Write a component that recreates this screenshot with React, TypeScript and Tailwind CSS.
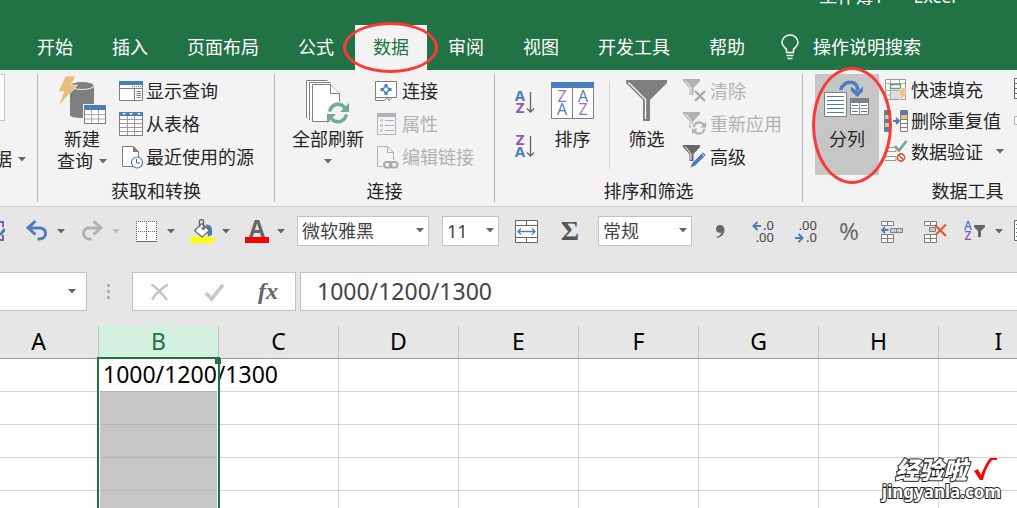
import type { ReactNode } from 'react'
import clsx from 'clsx'

// Spreadsheet window: tab strip, ribbon, quick toolbar, formula bar and grid.

const TABS_BEFORE = ['开始', '插入', '页面布局', '公式']
const TABS_AFTER = ['审阅', '视图', '开发工具', '帮助']
const COLUMNS = ['A', 'B', 'C', 'D', 'E', 'F', 'G', 'H', 'I']
const ROWS = [1, 2, 3, 4, 5]
const VALUE = '1000/1200/1300'

const BLUE = '#4a7ebb'
const GRAY = '#7f7f7f'
const DARK = '#666666'

function Arrow({ muted }: { muted?: boolean }) {
  return (
    <svg width="8" height="5" viewBox="0 0 8 5" className="shrink-0">
      <path d="M0 0h8L4 4.5z" fill={muted ? '#bdbdbd' : '#666'} />
    </svg>
  )
}

/* ---------- ribbon icons ---------- */

function NewQueryIcon() {
  return (
    <svg width="50" height="50" viewBox="0 0 50 50">
      <path d="M13 11v29c0 2 5 3 12 3s12-1 12-3V11z" fill={GRAY} />
      <ellipse cx="25" cy="10.500" rx="12" ry="4" fill={GRAY} stroke="#f3f3f3" />
      <path d="M8.500 1H19l-5 9h6.500L1.500 31 7 16.500H1z" fill="#e9bd7c" stroke="#f3f3f3" strokeWidth=".8" />
      <rect x="26" y="29" width="24" height="21" fill="#f3f3f3" />
      <rect x="27.500" y="30.500" width="21" height="18" fill="#fff" stroke={GRAY} />
      <path d="M27 30h22v5H27z" fill={BLUE} />
      <path d="M34.500 35v13M41.500 35v13M28 39.500h20M28 44h20" stroke="#aaa" />
    </svg>
  )
}

function ShowQueryIcon() {
  return (
    <svg width="24" height="20" viewBox="0 0 24 20">
      <path d="M.5.500h23v19H.5z" fill="#fff" stroke={GRAY} />
      <path d="M0 0h24v4H0z" fill={BLUE} />
      <path d="M1 7.500h22M15.500 7.500V19" stroke={GRAY} />
      <path d="M13 5.500h10" stroke={GRAY} strokeDasharray="1 1" />
      <path d="M17.500 10.500H22M17.500 12.500H22M17.500 14.500H22M17.500 16.500H22" stroke={GRAY} />
    </svg>
  )
}

function FromTableIcon() {
  return (
    <svg width="24" height="24" viewBox="0 0 24 24">
      <path d="M.5.500h23v23H.5z" fill="#fff" stroke={GRAY} />
      <path d="M0 0h24v4H0z" fill={BLUE} />
      <path d="M3 1h4L5 3zM10 1h4l-2 2zM18 1h4l-2 2z" fill="#fff" />
      <path d="M8.500 4v19M15.500 4v19M1 7.500h22M1 11.500h22M1 15.500h22M1 19.500h22" stroke="#9a9a9a" />
    </svg>
  )
}

function RecentIcon() {
  return (
    <svg width="24" height="24" viewBox="0 0 24 24">
      <path d="M3.500 1.500h11l5 5v15h-16z" fill="#fff" stroke={GRAY} />
      <path d="M14 1v6h6z" fill={GRAY} />
      <circle cx="18" cy="17.500" r="5.500" fill="#fff" stroke={BLUE} strokeWidth="1.200" />
      <path d="M17.500 14v4h3.500" fill="none" stroke={DARK} />
    </svg>
  )
}

function RefreshArrows({ color }: { color: string }) {
  return (
    <g fill="none" stroke={color} strokeWidth="3.400">
      <path d="M2.500 9.500C4 4.500 7 2.200 11 2.200c3 0 5.500 1.500 7.500 4.300" />
      <path d="M19.500 12.500c-1.500 5-4.500 7.300-8.500 7.300-3 0-5.500-1.500-7.500-4.300" />
      <path d="M22 1v9h-9zM0 21v-9h9z" fill={color} stroke="none" />
    </g>
  )
}

function RefreshAllIcon() {
  return (
    <svg width="44" height="46" viewBox="0 0 44 46">
      <g fill="#fff" stroke={GRAY}>
        <path d="M.5 39V1.500h21M3.500 41V3.500h21" />
        <path d="M6.500 5.500h18l9 9v28h-27z" />
        <path d="M24.500 5.500v9h9" />
      </g>
      <circle cx="32" cy="34" r="11.500" fill="#f3f3f3" />
      <g transform="translate(21 23)">
        <RefreshArrows color="#74a898" />
      </g>
    </svg>
  )
}

function ConnectionIcon() {
  return (
    <svg width="24" height="22" viewBox="0 0 24 22">
      <path d="M.5 1.500h21v16H.500z" fill="#fff" stroke={GRAY} />
      <path d="M.5 17.500v3h9l3-3 1.500 3 3-3" fill="none" stroke={GRAY} />
      <path d="M11 4v3.500M11 11.500V15M5.500 9.500H9M13 9.500h3.500" stroke={BLUE} strokeWidth="3" />
      <rect x="8.500" y="7" width="5" height="5" fill="#fff" stroke={BLUE} strokeWidth="1.500" transform="rotate(45 11 9.500)" />
    </svg>
  )
}

function PropertiesIcon() {
  return (
    <svg width="24" height="22" viewBox="0 0 24 22">
      <path d="M2.500.500h18v21h-18z" fill="#f7f2f9" stroke="#b1b1b1" />
      <path d="M2 0h19v4H2z" fill="#b1b1b1" />
      <g stroke="#b1b1b1" fill="none">
        <circle cx="6.500" cy="7.500" r="1" />
        <circle cx="6.500" cy="12.500" r="1" />
        <circle cx="6.500" cy="17.500" r="1" />
        <path d="M10 7.500h9M10 12.500h9M10 17.500h9" />
      </g>
    </svg>
  )
}

function EditLinksIcon() {
  return (
    <svg width="24" height="24" viewBox="0 0 24 24">
      <path d="M2.500 1.500h10l6 6v14h-16z" fill="#f7f2f9" stroke="#b1b1b1" />
      <path d="M12.500 1.500v6h6" fill="none" stroke="#b1b1b1" />
      <path d="M8 15h16v9H8z" fill="#f3f3f3" />
      <g fill="none">
        <rect x="9" y="17" width="7.500" height="5.500" rx="2.700" stroke="#aaa" strokeWidth="2" />
        <rect x="15" y="17" width="7.500" height="5.500" rx="2.700" stroke="#aaa" strokeWidth="2" />
      </g>
    </svg>
  )
}

function LetterSortIcon({ top, bottom }: { top: 'A' | 'Z'; bottom: 'A' | 'Z' }) {
  const fill = { A: BLUE, Z: '#8e57ab' }
  return (
    <svg width="20" height="24" viewBox="0 0 20 24" fontFamily="Open Sans, sans-serif" fontWeight="700" fontSize="15">
      <text x="5" y="11" textAnchor="middle" fill={fill[top]}>{top}</text>
      <text x="5" y="23" textAnchor="middle" fill={fill[bottom]}>{bottom}</text>
      <path d="M15.500 2v20M12 18.500l3.500 3.500 3.500-3.500" fill="none" stroke={DARK} strokeWidth="1.300" />
    </svg>
  )
}

function SortIcon() {
  return (
    <svg width="43" height="37" viewBox="0 0 43 37" fontFamily="Open Sans, sans-serif" fontSize="16" fontWeight="500">
      <path d="M.5.500h42v36H.5z" fill="#fff" stroke={GRAY} />
      <path d="M0 0h43v6H0z" fill={BLUE} />
      <path d="M21.500 6v30" stroke={GRAY} />
      <g textAnchor="middle">
        <text x="11" y="20" fill="#a36bbd">Z</text>
        <text x="11" y="33" fill={BLUE}>A</text>
        <text x="32" y="20" fill={BLUE}>A</text>
        <text x="32" y="33" fill="#a36bbd">Z</text>
      </g>
    </svg>
  )
}

function FilterIcon() {
  return (
    <svg width="41" height="41" viewBox="0 0 41 41">
      <path d="M0 0h41v3L24 20v21h-7V20L0 3z" fill={GRAY} />
      <path d="M2.500 2.500l17 17V39" fill="none" stroke="#fff" strokeWidth="1.200" />
    </svg>
  )
}

function SmallFunnel({ color }: { color: string }) {
  return (
    <>
      <path d="M0 0h17v2l-6.500 7v7h-4V9L0 2z" fill={color} />
      <path d="M2 1.500l6 7V15" fill="none" stroke="#fff" />
    </>
  )
}

function ClearFilterIcon() {
  return (
    <svg width="24" height="24" viewBox="0 0 24 24">
      <SmallFunnel color="#b1b1b1" />
      <path d="M12 12l10 10M22 12L12 22" stroke="#a9a9a9" strokeWidth="2.400" />
    </svg>
  )
}

function ReapplyIcon() {
  return (
    <svg width="24" height="24" viewBox="0 0 24 24">
      <SmallFunnel color="#b1b1b1" />
      <circle cx="16" cy="16" r="8" fill="#f3f3f3" />
      <g transform="translate(9 9) scale(.64)">
        <RefreshArrows color="#b1b1b1" />
      </g>
    </svg>
  )
}

function AdvancedIcon() {
  return (
    <svg width="24" height="24" viewBox="0 0 24 24">
      <SmallFunnel color={DARK} />
      <path d="M7 23l2-5L20 7l3 3-11 11z" fill={BLUE} stroke="#f3f3f3" strokeWidth=".6" />
      <path d="M18.500 8.500l3 3" stroke="#f3f3f3" />
    </svg>
  )
}

function TextToColumnsIcon() {
  return (
    <svg width="46" height="40" viewBox="0 0 46 40">
      <path d="M16.500 11C18.500 5 22.500 3.200 26.500 3.200c4.500 0 7 3.300 7.500 8.300" fill="none" stroke={BLUE} strokeWidth="3.400" />
      <path d="M27 7.500l6.500 5 5.500-5v4.500L33.500 18 27 12z" fill={BLUE} />
      <path d="M.5 13.500h22v24H.500z" fill="#fff" stroke={GRAY} />
      <path d="M3 17.500h17M3 21.500h17M3 25.500h17M3 29.500h17M3 33.500h17" stroke={BLUE} />
      <path d="M26.500 19.500h18v16h-18z" fill="#fff" stroke={GRAY} />
      <path d="M26 19h19v5H26z" fill={GRAY} />
      <path d="M35.500 24v11M27 29.500h17" stroke="#999" />
      <path d="M28 26.500h6M28 32.500h6M37 26.500h6M37 32.500h6" stroke={BLUE} />
    </svg>
  )
}

function FlashFillIcon() {
  return (
    <svg width="24" height="24" viewBox="0 0 24 24">
      <path d="M1.500 1.500h20v20h-20z" fill="#fff" stroke="#999" />
      <path d="M1 5.500h20M1 12.500h20M1 17h20M6.500 1v20M15.500 1v5M15.500 12v9" stroke="#aaa" />
      <path d="M6.500 6.500h10v4h-10z" fill="#fff" stroke="#5f9d88" strokeWidth="1.400" />
      <path d="M7 13h9v8H7z" fill="#ddd" />
      <path d="M17 10h6l-3 4.500h3.500L14.500 24l2.500-7h-3z" fill="#eec27c" stroke="#f3f3f3" strokeWidth=".5" />
    </svg>
  )
}

function RemoveDuplicatesIcon() {
  return (
    <svg width="24" height="24" viewBox="0 0 24 24">
      <path d="M.5 1.500h6v21h-6z" fill={BLUE} stroke={GRAY} />
      <path d="M1 6h5v4H1zM1 14h5v4H1z" fill="#efc385" />
      <path d="M16.500 1.500h7v21h-7z" fill="#fff" stroke={GRAY} />
      <path d="M17 2h6v4h-6z" fill={BLUE} />
      <path d="M17 6h6v4h-6z" fill="#efc385" />
      <path d="M17 10.500h6M17 14.500h6M17 18.500h6" stroke={GRAY} />
      <path d="M9 12h6M12 9l3 3-3 3" fill="none" stroke={BLUE} strokeWidth="1.800" />
    </svg>
  )
}

function ValidationIcon() {
  return (
    <svg width="24" height="24" viewBox="0 0 24 24">
      <path d="M1 7.500h11v4H1M1 16.500h11v4H1" fill="#fff" stroke="#999" />
      <path d="M11 6l4 4.500L22.500 1" fill="none" stroke="#6aa893" strokeWidth="2.600" />
      <circle cx="17" cy="17.500" r="3.600" fill="#fff" stroke="#d9532c" strokeWidth="1.600" />
      <path d="M14.500 15l5 5" stroke="#d9532c" strokeWidth="1.500" />
    </svg>
  )
}

/* ---------- toolbar icons ---------- */

function UndoIcon({ color, flip }: { color: string; flip?: boolean }) {
  return (
    <svg width="24" height="24" viewBox="0 0 24 24">
      <g transform={flip ? 'translate(24 0) scale(-1 1)' : undefined} fill="none" stroke={color} strokeWidth="3">
        <path d="M3 9h11.500c4.500 0 6 3 6 5.500s-2 5.500-6.500 5.500h-1.500" />
        <path d="M10.500 2L3 8.800l7.500 6.700" />
      </g>
    </svg>
  )
}

function BorderIcon() {
  return (
    <svg width="24" height="24" viewBox="0 0 24 24">
      <path d="M1 2h21v20H1z" fill="#fff" />
      <path d="M1 2.500h21M1.500 2v20M21.500 2v20M11.500 2v20M1 12.500h21" stroke={DARK} strokeDasharray="1 1" />
      <path d="M1 22.500h21" stroke={DARK} />
    </svg>
  )
}

function FillIcon() {
  return (
    <svg width="24" height="24" viewBox="0 0 24 24">
      <path d="M0 18h24v6H0z" fill="#ff0" />
      <path d="M16 5.500c4 0 6 2 6 6V16l-4 1.500z" fill={BLUE} />
      <path d="M4.500 11.500L12 4.500l7.500 7L12 18z" fill="#fff" stroke={DARK} strokeWidth="1.200" />
      <path d="M9.500 8V2c0-2 4-2 4 0v6.500M11.500 8.500l2 2 2-3" fill="none" stroke={DARK} strokeWidth="1.400" />
    </svg>
  )
}

function FontColorIcon() {
  return (
    <svg width="24" height="24" viewBox="0 0 24 24">
      <text x="12" y="18" textAnchor="middle" fontFamily="Open Sans, sans-serif" fontWeight="700" fontSize="23" fill={DARK}>A</text>
      <path d="M0 18h24v6H0z" fill="#f00" />
    </svg>
  )
}

function MergeIcon() {
  return (
    <svg width="24" height="24" viewBox="0 0 24 24">
      <path d="M.5 1.500h22v22H.5z" fill="#fff" stroke={DARK} />
      <path d="M0 6.500h23M0 18.500h23M11.500 1v5M11.500 19v5" stroke={DARK} />
      <path d="M3 12.500h17M6 9.500l-3 3 3 3M17 9.500l3 3-3 3" fill="none" stroke={BLUE} strokeWidth="1.400" />
    </svg>
  )
}

function CommaIcon() {
  return (
    <svg width="24" height="24" viewBox="0 0 24 24">
      <path d="M12 6c3 0 4.500 2 4.500 5 0 4-3 7-7.500 8l-.4-1c2.800-1 4.400-2.500 4.400-4.500-3 .8-5-1-5-3.500 0-2.400 1.800-4 4-4z" fill={DARK} />
    </svg>
  )
}

function DecimalIcon({ more }: { more?: boolean }) {
  return (
    <svg width="24" height="24" viewBox="0 0 24 24" fontFamily="Noto Sans, sans-serif" fontSize="13" fill="#444">
      <text x="23" y="11" textAnchor="end">{more ? '.0' : '.00'}</text>
      <text x="23" y="23" textAnchor="end">{more ? '.00' : '.0'}</text>
      {more ? (
        <path d="M10 7H2.500M6.500 3L2.500 7l4 4" fill="none" stroke={BLUE} strokeWidth="2" />
      ) : (
        <path d="M1 19h7.500M4.500 15l4 4-4 4" fill="none" stroke={BLUE} strokeWidth="2" />
      )}
    </svg>
  )
}

function CellsIcon({ remove }: { remove?: boolean }) {
  return (
    <svg width="24" height="24" viewBox="0 0 24 24">
      <g fill="#fff" stroke={GRAY}>
        <path d="M1.500 2.500h12v4h-12zM7.500 2.500v4M1.500 15.500h12v8h-12zM7.500 15.500v8M1.500 19.500h12" />
        <path d={remove ? 'M6.500 8.500h6v4h-6z' : 'M10.500 9.500h12v4h-12zM16.500 9.500v4'} fill="#bdcde4" />
      </g>
      {remove ? (
        <path d="M12 6l11 11M23 5.500L12.500 16" stroke="#dc5a34" strokeWidth="2.200" />
      ) : (
        <path d="M8.500 11H2.500M5 8l-3 3 3 3" fill="none" stroke={BLUE} strokeWidth="1.800" />
      )}
    </svg>
  )
}

function SortFilterIcon() {
  return (
    <svg width="24" height="24" viewBox="0 0 24 24" fontFamily="Open Sans, sans-serif" fontSize="12" fontWeight="600">
      <text x="5" y="11" textAnchor="middle" fill={BLUE}>A</text>
      <text x="5" y="21" textAnchor="middle" fill="#8e57ab">Z</text>
      <path d="M11 6h11v2l-4 4v6h-3v-6l-4-4z" fill={DARK} />
    </svg>
  )
}

/* ---------- building blocks ---------- */

function Group({ label, className, children }: { label: string; className?: string; children: ReactNode }) {
  return (
    <section className={clsx('flex h-32 shrink-0 flex-col border-r border-[#b4b4b4]', className)}>
      <div className="flex h-[108px] items-start">{children}</div>
      <div className="text-center leading-[22px]">{label}</div>
    </section>
  )
}

function BigButton({ icon, className, children }: { icon: ReactNode; className?: string; children: ReactNode }) {
  return (
    <button type="button" className={clsx('flex shrink-0 flex-col items-center leading-[22px]', className)}>
      <span className="flex h-[54px] flex-col justify-end pb-[3px]">{icon}</span>
      {children}
    </button>
  )
}

function SmallButton({ icon, label, disabled, menu, short }: {
  icon: ReactNode
  label: string
  disabled?: boolean
  menu?: boolean
  short?: boolean
}) {
  return (
    <button
      type="button"
      disabled={disabled}
      className={clsx(
        'flex items-center gap-[3px] whitespace-nowrap',
        short ? 'h-[31px]' : 'h-[33px]',
        disabled && 'text-[#b1b1b1]',
      )}
    >
      <span className="flex w-6">{icon}</span>
      {label}
      {menu && <span className="ml-2.5"><Arrow /></span>}
    </button>
  )
}

function SplitTool({ icon, label, muted }: { icon: ReactNode; label: string; muted?: boolean }) {
  return (
    <button type="button" aria-label={label} className="mr-[15px] flex shrink-0 items-center gap-2">
      {icon}
      <Arrow muted={muted} />
    </button>
  )
}

function Tool({ label, children }: { label: string; children: ReactNode }) {
  return (
    <button type="button" aria-label={label} className="flex h-6 w-6 shrink-0 items-center justify-center">
      {children}
    </button>
  )
}

function ToolSelect({ label, value, className }: { label: string; value: string; className: string }) {
  return (
    <div className={clsx('relative h-[30px] shrink-0', className)}>
      <select
        aria-label={label}
        defaultValue={value}
        className="h-full w-full appearance-none border border-[#c3c3c3] bg-white pl-1 text-lg leading-6 text-[#444]"
      >
        <option>{value}</option>
      </select>
      <span className="pointer-events-none absolute top-3 right-[5px] flex">
        <Arrow />
      </span>
    </div>
  )
}

/* ---------- page sections ---------- */

function Header() {
  return (
    <header className="bg-[#217346] text-lg leading-6 text-white">
      <div className="flex h-[25px] justify-end gap-3 pr-[61px]">
        <span className="-mt-4">工作簿1</span>
        <span className="-mt-4">-</span>
        <span className="-mt-4">Excel</span>
      </div>
      <nav className="flex h-[45px] gap-[3px] pl-[19px] whitespace-nowrap">
        {TABS_BEFORE.map((tab) => (
          <button key={tab} type="button" className="px-[18px] pb-0.5">{tab}</button>
        ))}
        <button type="button" className="relative z-10 bg-[#f3f3f3] px-[18px] pb-0.5 text-[#217346]">
          数据
          <span className="pointer-events-none absolute -top-[3px] -left-3 h-[51px] w-[95px] rounded-[50%] border-[3px] border-[#f93a37]" />
        </button>
        {TABS_AFTER.map((tab) => (
          <button key={tab} type="button" className="px-[18px] pb-0.5">{tab}</button>
        ))}
        <button type="button" className="flex items-center gap-[14px] pb-0.5 pl-[15px]">
          <svg width="18" height="26" viewBox="0 0 18 26" fill="none" stroke="#fff" strokeWidth="1.500">
            <path d="M5.500 18.500v-3C3.500 13 1 11.500 1 8.500a8 7.500 0 0 1 16 0c0 3-2.500 4.500-4.500 7v3z" />
            <path d="M5.500 21.500h7M6.500 24.500h5" />
          </svg>
          操作说明搜索
        </button>
      </nav>
    </header>
  )
}

function Ribbon() {
  return (
    <div className="flex border-b border-[#cfcfcf] bg-[#f3f3f3] py-1 text-lg leading-6 text-[#262626]">
      <div className="flex h-32 w-[38px] shrink-0 flex-col border-r border-[#b4b4b4]">
        <div className="h-[47px] w-[5px] border border-l-0 border-[#c3c3c3] bg-white" />
        <button type="button" className="mt-[26px] flex items-center gap-1.5 leading-6">
          <span className="flex w-3 justify-end overflow-hidden">据</span>
          <Arrow />
        </button>
      </div>

      <Group label="获取和转换" className="w-[237px]">
        <BigButton className="ml-[19px] w-[50px]" icon={<NewQueryIcon />}>
          <span>新建</span>
          <span className="flex items-center gap-1.5">查询 <Arrow /></span>
        </BigButton>
        <div className="ml-3">
          <SmallButton icon={<ShowQueryIcon />} label="显示查询" />
          <SmallButton icon={<FromTableIcon />} label="从表格" />
          <SmallButton icon={<RecentIcon />} label="最近使用的源" />
        </div>
      </Group>

      <Group label="连接" className="w-[220px]">
        <BigButton className="ml-[17px]" icon={<RefreshAllIcon />}>
          <span>全部刷新</span>
          <span className="flex h-[22px] items-center"><Arrow /></span>
        </BigButton>
        <div className="ml-[11px]">
          <SmallButton icon={<ConnectionIcon />} label="连接" />
          <SmallButton icon={<PropertiesIcon />} label="属性" disabled />
          <SmallButton icon={<EditLinksIcon />} label="编辑链接" disabled />
        </div>
      </Group>

      <Group label="排序和筛选" className="w-[308px]">
        <div className="mt-4 ml-5 flex flex-col gap-5">
          <button type="button" aria-label="升序"><LetterSortIcon top="A" bottom="Z" /></button>
          <button type="button" aria-label="降序"><LetterSortIcon top="Z" bottom="A" /></button>
        </div>
        <BigButton className="ml-4" icon={<span className="mb-1.5"><SortIcon /></span>}>排序</BigButton>
        <div className="mt-[7px] ml-[15px] h-[88px] border-l border-[#cfcfcf]" />
        <BigButton className="ml-4" icon={<span className="mb-1"><FilterIcon /></span>}>筛选</BigButton>
        <div className="ml-4">
          <SmallButton icon={<ClearFilterIcon />} label="清除" disabled />
          <SmallButton icon={<ReapplyIcon />} label="重新应用" disabled />
          <SmallButton icon={<AdvancedIcon />} label="高级" />
        </div>
      </Group>

      <Group label="数据工具" className="w-[330px]">
        <BigButton className="relative z-10 ml-3 h-[101px] w-16 bg-[#c6c6c6]" icon={<span className="mb-1.5"><TextToColumnsIcon /></span>}>
          分列
          <span className="pointer-events-none absolute -top-[7px] -left-[3px] h-[117px] w-20 rounded-[50%] border-[3px] border-[#f93a37]" />
        </BigButton>
        <div className="ml-[5px]">
          <SmallButton short icon={<FlashFillIcon />} label="快速填充" />
          <SmallButton short icon={<RemoveDuplicatesIcon />} label="删除重复值" />
          <SmallButton short icon={<ValidationIcon />} label="数据验证" menu />
        </div>
        <div className="ml-2.5 flex flex-col gap-4 pt-1">
          <svg width="24" height="22" viewBox="0 0 24 22">
            <path d="M.5.500h22v20H.5z" fill="#fff" stroke={DARK} />
            <path d="M1 5.500h21M1 10.500h21M1 15.500h21" stroke={DARK} />
          </svg>
          <svg width="24" height="10" viewBox="0 0 24 10">
            <path d="M.5.500h20v8H.5z" fill="#fff" stroke="#b1b1b1" />
          </svg>
        </div>
      </Group>
    </div>
  )
}

function Toolbar() {
  return (
    <div className="flex h-12 items-center">
      <svg width="5" height="24" viewBox="0 0 5 24" className="mr-5 shrink-0">
        <path d="M0 3h3v5M0 21h3v-5" fill="none" stroke="#8e57ab" strokeWidth="2" />
        <path d="M0 16l5-6" stroke={BLUE} strokeWidth="3" />
      </svg>
      <SplitTool label="撤消" icon={<UndoIcon color={BLUE} />} />
      <SplitTool label="恢复" icon={<UndoIcon color="#b1b1b1" flip />} muted />
      <SplitTool label="边框" icon={<BorderIcon />} />
      <SplitTool label="填充颜色" icon={<FillIcon />} />
      <SplitTool label="字体颜色" icon={<FontColorIcon />} />
      <div className="-ml-[3px] flex shrink-0 gap-[13px]">
        <ToolSelect label="字体" value="微软雅黑" className="w-[132px]" />
        <ToolSelect label="字号" value="11" className="w-[57px]" />
      </div>
      <div className="ml-4 flex shrink-0 gap-[19px]">
        <Tool label="合并后居中"><MergeIcon /></Tool>
        <Tool label="自动求和">
          <span className="font-['Liberation_Serif',serif] text-[28px] leading-6 font-bold text-[#555]">Σ</span>
        </Tool>
      </div>
      <div className="mx-4 flex shrink-0">
        <ToolSelect label="数字格式" value="常规" className="w-[94px]" />
      </div>
      <div className="flex shrink-0 gap-[19px]">
        <Tool label="千位分隔样式"><CommaIcon /></Tool>
        <Tool label="增加小数位数"><DecimalIcon more /></Tool>
        <Tool label="减少小数位数"><DecimalIcon /></Tool>
        <Tool label="百分比样式"><span className="text-2xl leading-6 text-[#666]">%</span></Tool>
        <Tool label="插入单元格"><CellsIcon /></Tool>
        <Tool label="删除单元格"><CellsIcon remove /></Tool>
      </div>
      <div className="ml-4 flex shrink-0">
        <SplitTool label="排序和筛选" icon={<SortFilterIcon />} />
      </div>
      <svg width="24" height="22" viewBox="0 0 24 22" className="-ml-1 shrink-0">
        <path d="M.5.500h22v20H.5z" fill="#fff" stroke={DARK} />
        <path d="M2 4.500h19M2 8.500h19M2 12.500h19M2 16.500h19" stroke={BLUE} />
      </svg>
    </div>
  )
}

function FormulaBar() {
  return (
    <div className="mt-[17px] mb-[15px] flex h-[39px]">
      <div className="flex w-[87px] shrink-0 items-center justify-end border border-l-0 border-[#c3c3c3] bg-[#fdfdfd] pr-2.5">
        <Arrow />
      </div>
      <div className="flex w-[45px] shrink-0 flex-col justify-center gap-[3px] pl-5">
        <span className="h-[3px] w-[3px] bg-[#b1b1b1]" />
        <span className="h-[3px] w-[3px] bg-[#b1b1b1]" />
        <span className="h-[3px] w-[3px] bg-[#b1b1b1]" />
      </div>
      <div className="mr-1 flex w-[164px] shrink-0 items-center justify-between border border-[#c3c3c3] bg-[#fdfdfd] px-[17px]">
        <button type="button" aria-label="取消">
          <svg width="20" height="20" viewBox="0 0 20 20">
            <path d="M1.500 2.500C7 6 12 11.500 17 18M18 2.500C12 6 6.500 11 2 17.500" fill="none" stroke="#c4c4c4" strokeWidth="2.400" />
          </svg>
        </button>
        <button type="button" aria-label="输入">
          <svg width="20" height="20" viewBox="0 0 20 20">
            <path d="M2 11l5.500 6L19 3" fill="none" stroke="#c8c8c8" strokeWidth="3.600" />
          </svg>
        </button>
        <button type="button" className="pb-0.5 font-['Liberation_Serif',serif] text-2xl leading-6 font-bold text-[#666] italic">
          fx
        </button>
      </div>
      <input
        aria-label="编辑栏"
        defaultValue={VALUE}
        className="min-w-0 flex-1 border border-r-0 border-[#c3c3c3] bg-[#fdfdfd] pb-0.5 pl-4 text-[23px] leading-8 text-[#444] outline-none"
      />
    </div>
  )
}

function Grid() {
  return (
    <table className="-ml-[21px] w-[1080px] table-fixed border-separate border-spacing-0 text-[23px] leading-[30px] text-black">
      <thead>
        <tr>
          {COLUMNS.map((col) => (
            <th
              key={col}
              scope="col"
              className={clsx(
                'h-[33px] border-r border-b border-r-[#c3c3c3] border-b-[#9b9b9b] p-0 pb-0.5 font-normal',
                col === 'B' && 'bg-[#d3f0e0] text-[#217346]',
              )}
            >
              {col}
            </th>
          ))}
        </tr>
      </thead>
      <tbody className="bg-white">
        {ROWS.map((row) => (
          <tr key={row}>
            {COLUMNS.map((col) => (
              <td
                key={col}
                className={clsx(
                  'h-[33px] border-r border-b border-[#d4d4d4] p-0 pb-0.5',
                  col === 'B' && row > 1 && 'border-b-[#b4b4b4] bg-[#c6c6c6]',
                  col === 'B' && row === 1 && 'relative border-b-[#b4b4b4]',
                )}
              >
                {col === 'B' && row === 1 && (
                  <>
                    <div className="w-0 pl-1 whitespace-nowrap">{VALUE}</div>
                    {/* selection frame runs down past the last visible row */}
                    <div className="absolute -top-0.5 -left-0.5 h-[170px] w-[123px] border-2 border-[#217346]">
                      <div className="h-full border-x border-white" />
                      <span className="absolute -top-px -right-[3px] h-1.5 w-1.5 bg-[#217346]" />
                    </div>
                  </>
                )}
              </td>
            ))}
          </tr>
        ))}
      </tbody>
    </table>
  )
}

function Watermark() {
  return (
    <div className="pointer-events-none absolute right-4 bottom-1.5 text-white [-webkit-text-stroke:2px_#222] [paint-order:stroke]">
      <div className="flex items-center justify-end gap-1.5 pr-1 text-2xl leading-6 font-black italic">
        经验啦
        <svg width="24" height="24" viewBox="0 0 24 24">
          <path d="M1 13l4-2 3 6C11 9 14 4 17 0h7v2h-5c-4 5-7 11-9 20H7z" fill="#f00" />
        </svg>
      </div>
      <div className="text-[17px] leading-5 font-bold">jingyanla.com</div>
    </div>
  )
}

export default function App() {
  return (
    <div className="relative h-screen overflow-hidden bg-[#e6e6e6] font-['Noto_Sans','Noto_Sans_CJK_SC',sans-serif]">
      <Header />
      <Ribbon />
      <Toolbar />
      <FormulaBar />
      <Grid />
      <Watermark />
    </div>
  )
}
